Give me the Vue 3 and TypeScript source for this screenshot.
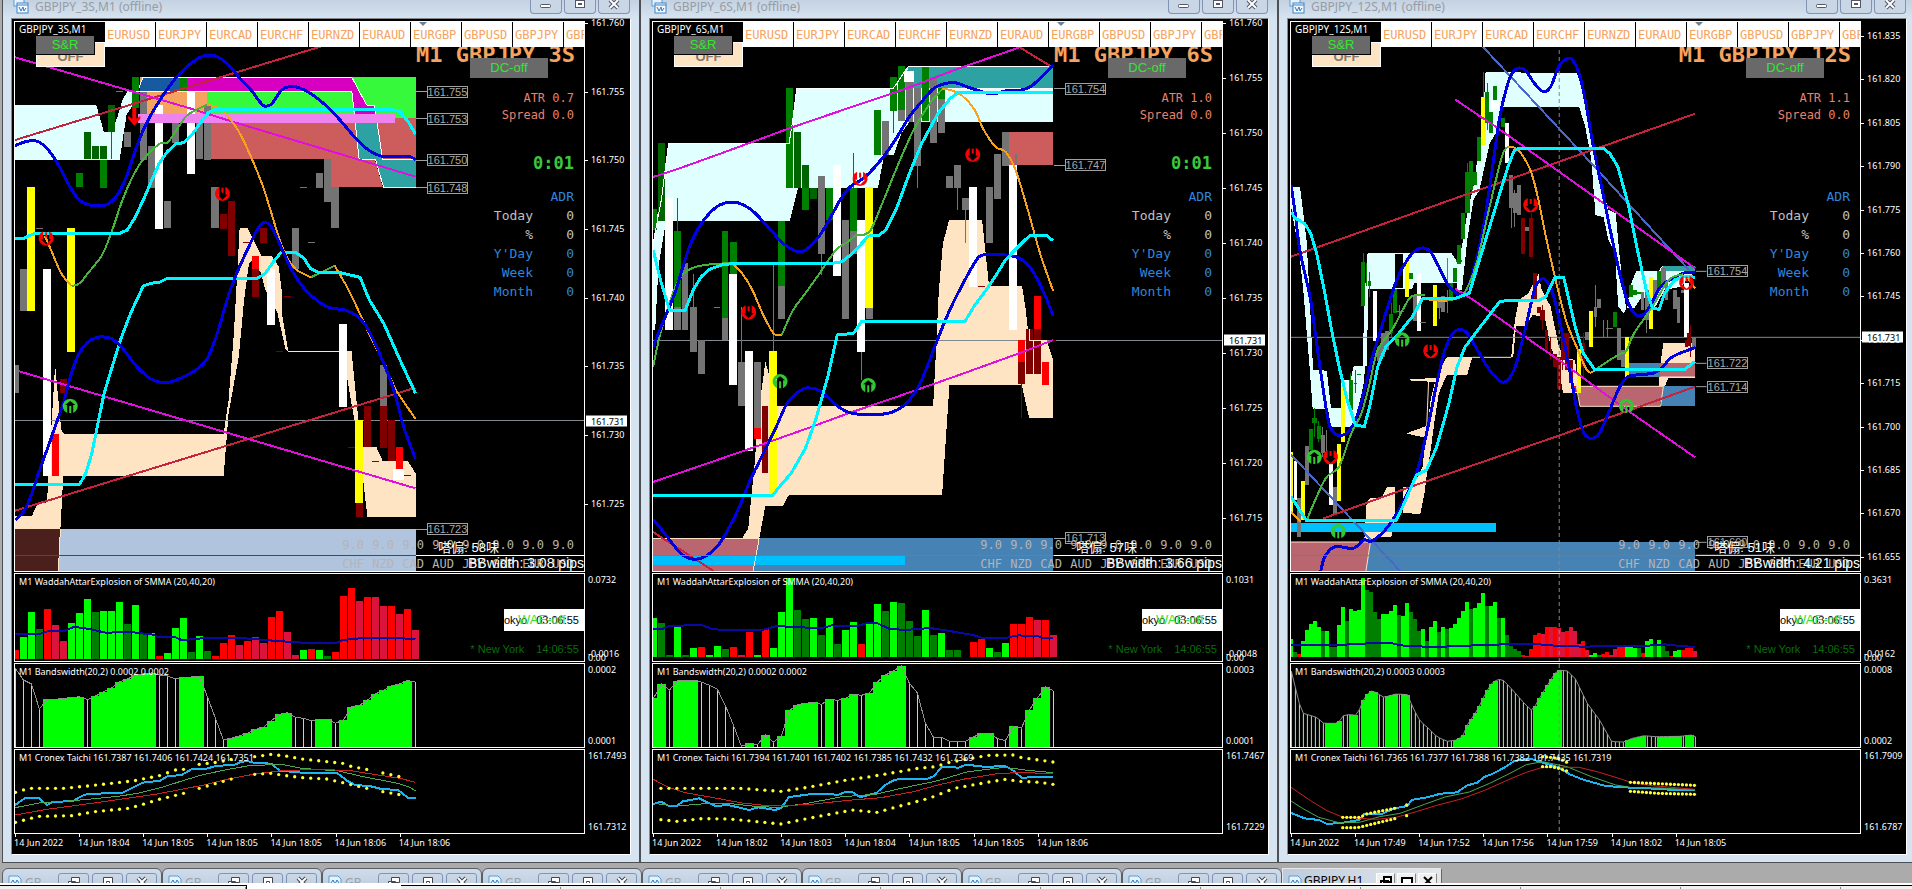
<script setup lang="ts">
type Line = { c: string; w: number; d: string; smooth?: boolean }
type Fill = { c: string; p: string }
interface Chart {
  name: string
  period: string
  x0: number
  width: number
  step: number
  barWidth: number
  top: number
  priceTop: number
  pxPerUnit: number
  ticks: string[]
  current: number
  timer: string
  atr: string
  taste: string
  bb: string
  tagX: number
  tags: [string, number][]
  fills: Fill[]
  candles: string
  lines: Line[]
  marks: [number, number, string][]
  divider: number
  separator: string
  wae: string
  waeBase: number
  waeLine: string
  waeMax: string
  waeMin: string
  bands: string
  bandsText: string
  bandsMax: string
  bandsMin: string
  cronex: [string, string, string]
  dots: string[]
  cronexText: string
  cronexMax: string
  cronexMin: string
  times: string[]
}

const CYAN = '#e0ffff'
const BISQUE = '#ffe4c4'
const TEAL = '#2ea2a2'
const RED = '#cd5c5c'
const ROSE = '#ba6670'
const STEEL = '#4682b4'
const BLUE = '#0000dc'
const AQUA = '#00f5ff'
const GREEN = '#46b43c'
const ORANGE = '#f5a31e'
const CRIMSON = '#c3233c'
const MAGENTA = '#e010dc'
const ROYAL = '#4a68c8'

const candleColors: Record<string, string> = {
  w: '#ffffff', y: '#ffff00', g: '#008000', d: '#006400', x: '#747474', m: '#800000', r: '#ff0000', k: '#000000',
}
const waeColors: Record<string, string> = { r: '#ff0000', c: '#dc143c', g: '#00ff00', d: '#008000' }

const pairs = ['EURUSD', 'EURJPY', 'EURCAD', 'EURCHF', 'EURNZD', 'EURAUD', 'EURGBP', 'GBPUSD', 'GBPJPY', 'GBPCAD']
const currencies = ['CHF', 'NZD', 'CAD', 'AUD', 'JPY', 'GBP', 'EUR', 'USD']
const adrRows = ['Today', '%', "Y'Day", 'Week', 'Month']

const charts: Chart[] = [
  {
    name: 'GBPJPY_3S,M1', period: '3S', x0: 36.75, width: 1394, step: 19.6, barWidth: 17, top: 0,
    priceTop: 161.76, pxPerUnit: 13680, current: 1261, timer: '0:01', atr: '0.7', taste: '嗒傓: 58味', bb: '3.08',
    ticks: ['161.760', '161.755', '161.750', '161.745', '161.740', '161.735', '161.730', '161.725'],
    tagX: 1045,
    tags: [['161.755', 275], ['161.753', 356], ['161.750', 480], ['161.748', 563], ['161.723', 1588]],
    fills: [
      { c: CYAN, p: '37,315 236,315 250,375 254,396 273,396 288,350 300,300 312,274 343,274 325,315 310,345 303,400 293,480 37,480' },
      { c: '#f4a460', p: '343,232 350,232 508,274 508,343 343,343' },
      { c: '#175aa0', p: '343,250 350,232 458,232 458,274 343,274' },
      { c: '#d800c0', p: '458,232 862,232 898,315 918,317 922,345 868,345 862,274 458,274' },
      { c: '#35f93a', p: '862,232 1018,232 1018,354 968,354 968,343 922,343 918,317 898,315' },
      { c: '#35f93a', p: '508,274 862,274 868,343 508,343' },
      { c: TEAL, p: '870,360 925,360 937,478 1018,478 1018,563 940,563 920,480 880,480' },
      { c: RED, p: '968,354 1018,354 1018,478 937,478 925,369 968,369' },
      { c: RED, p: '518,369 870,369 880,478 918,478 938,562 811,562 811,477 518,477' },
      { c: BISQUE, p: '37,1548 78,1548 92,1511 115,1507 125,1300 135,1095 150,1290 157,1302 548,1302 560,1200 573,1000 583,780 587,685 607,685 640,767 665,767 683,800 690,870 692,950 706,1054 700,1050 680,940 650,870 640,820 620,780 610,790 598,900 585,1070 560,1240 548,1427 155,1427 148,1587 37,1587' },
      { c: BISQUE, p: '706,1052 861,1052 878,1260 888,1341 922,1341 938,1384 1000,1384 1018,1420 1018,1551 900,1551 888,1420 868,1260 850,1130 848,1056 706,1056' },
      { c: '#4b1f1b', p: '37,1587 148,1587 143,1713 37,1713' },
      { c: '#b0c4de', p: '148,1587 1018,1587 1018,1713 143,1713' },
    ],
    candles: '58,18,808,932,x 76,18,561,932,y 42,10,1095,1178,x 115,20,808,1428,w 174,20,685,1056,y 155,16,1137,1178,m 136,18,1302,1427,r 194,17,519,561,g 214,17,396,478,d 234,17,438,478,d 253,17,438,478,d 253,17,480,563,g 273,16,315,396,d 273,2,396,478,g 332,18,232,325,g 312,16,396,440,x 351,17,274,480,x 372,17,438,563,x 389,20,315,687,w 411,17,603,685,x 430,17,369,430,x 468,20,274,521,w 450,16,232,274,g 488,18,369,478,x 508,18,319,480,x 527,18,561,685,x 547,17,642,687,m 567,17,603,768,m 645,17,685,728,m 626,18,767,808,r 626,18,808,890,m 664,20,808,974,w 724,18,685,808,x 783,17,519,563,x 802,17,478,606,x 821,18,561,685,x 840,20,972,1220,w 880,19,1260,1509,y 880,17,1510,1551,m 900,17,1218,1342,m 939,17,1095,1218,x 939,17,1218,1343,m 959,17,1260,1384,m 978,17,1341,1407,r 976,26,1407,1440,w 605,18,726,729,m 685,18,1052,1055,m 704,18,888,891,m 743,18,561,564,x 763,18,726,729,x 861,18,1341,1344,m 920,18,1383,1386,m 998,18,1426,1429,m 96,18,684,687,x 293,18,274,277,x',
    lines: [
      { c: '#ffffff', w: 1, d: '340,265 350,232 862,232 898,315 918,317 937,478 1018,478' },
      { c: '#ffffff', w: 1, d: '325,274 862,274 880,479 920,479 940,563 1018,563' },
      { c: '#ee82ee', w: 9, d: '338,356 968,356' },
      { c: BISQUE, w: 1, d: '148,1587 143,1713' },
      { c: CRIMSON, w: 2, d: '37,420 785,140' },
      { c: CRIMSON, w: 2, d: '37,1532 1018,1163' },
      { c: MAGENTA, w: 2, d: '37,172 312,270 460,323 580,369 1018,530' },
      { c: MAGENTA, w: 2, d: '47,1114 1018,1465' },
      { c: ORANGE, w: 2, d: '110,708 125,750 150,820 175,858', smooth: true },
      { c: GREEN, w: 2, d: '175,858 195,850 215,820 250,765 275,690 300,600 325,530 350,480 390,432 410,428 430,395 455,350 480,330 508,314', smooth: true },
      { c: ORANGE, w: 2, d: '508,314 530,320 545,332 575,375 600,430 640,545 660,620 680,700 700,765 725,808 762,832', smooth: true },
      { c: GREEN, w: 2, d: '762,832 820,797' },
      { c: ORANGE, w: 2, d: '820,797 850,860 870,910 900,990 940,1090 970,1170 1000,1225 1018,1256' },
      { c: AQUA, w: 3, d: '37,716 58,715 85,700 293,700 312,690 332,650 351,600 372,540 390,490 410,455 430,432 450,428 470,405 490,370 510,338 525,328 960,328 980,335 1000,365 1018,402' },
      { c: AQUA, w: 3, d: '37,1453 195,1453 210,1420 225,1360 240,1270 255,1180 275,1100 295,1020 320,940 351,858 370,850 392,846 410,835 630,835 650,820 670,785 688,758 725,758 745,775 760,805 780,817 830,817 882,832 905,900 940,970 980,1080 1018,1180' },
      { c: BLUE, w: 3, smooth: true, d: '37,437 60,426 83,422 97,427 115,445 135,478 155,522 175,568 194,600 214,613 235,617 254,617 273,605 293,575 312,522 332,450 351,390 372,340 400,285 430,235 460,198 490,172 515,165 540,175 565,202 590,238 615,270 635,303 648,318 665,312 690,270 710,260 735,264 770,288 810,330 840,370 875,420 905,452 940,470 1000,469 1018,479' },
      { c: BLUE, w: 3, smooth: true, d: '37,1560 60,1530 78,1480 97,1410 115,1350 135,1280 155,1210 175,1120 194,1060 214,1028 235,1013 255,1011 275,1017 300,1045 335,1100 370,1137 405,1148 440,1136 485,1105 510,1070 535,990 560,885 580,820 600,765 630,690 647,667 667,685 690,745 715,810 745,865 780,905 810,924 845,930 875,948 895,975 915,1020 940,1090 965,1170 990,1285 1018,1376' },
    ],
    marks: [[113, 715, 'down'], [545, 581, 'down'], [172, 1218, 'up'], [329, 350, 'arrow']],
    divider: 0, separator: '#4a4a4a',
    wae: '270r 231g 156g 207d 147r 195c 243c 189g 159g 117g 156d 153g 153g 126g 192d 135g 219d 219g 288r 279g 204g 174g 276d 228g 273d 288r 249r 225r 255c 243r 231c 249c 171r 153r 216c 285c 270g 267r 270g 288d 276r 108r 84r 123c 111r 111c 138c 138r 162c 147r 210c',
    waeBase: 297, waeMax: '0.0732', waeMin: '-0.0016',
    waeLine: '38,222 100,221 118,213 160,212 180,201 205,204 260,218 320,216 375,224 385,230 430,232 445,240 480,237 510,233 590,234 620,237 680,243 740,248 825,248 840,240 890,234 950,233 1018,237',
    bands: '325t 360t 372t 447t 418f 418f 415f 413f 410f 419t 408f 396f 384f 366f 357f 345f 342f 339f 345t 348t 357t 352f 351f 349f 410t 475t 540t 535f 528f 520f 508f 502f 482f 463f 458f 472t 475t 482t 478f 478f 490t 480f 441f 436f 420f 402f 391f 378f 372f 362f 366t',
    bandsText: '0.0002 0.0002', bandsMax: '0.0002', bandsMin: '0.0001',
    cronex: [
      '37,735 62,714 95,714 115,735 132,725 178,724 200,708 215,702 300,698 325,683 350,668 392,662 410,649 445,645 470,627 505,626 530,618 575,614 590,606 605,603 625,609 665,611 685,632 740,638 825,638 850,662 870,675 905,678 935,687 975,690 1000,714 1018,714',
      '37,743 100,728 180,722 290,709 340,699 400,681 450,661 500,643 560,628 610,617 690,613 740,625 830,633 890,650 975,670 1000,680 1018,692',
      '37,765 115,748 200,734 300,717 380,703 440,689 500,675 560,657 620,643 690,632 780,628 860,632 900,640 980,655 1018,667',
    ],
    dots: [
      '38,697 57,690 76,685 155,685 215,678 330,662 390,647 430,630 450,628', '488,613 530,607 567,598', '624,590 665,583 705,589 740,597 840,610 860,619 902,629', '938,639 979,650',
      '38,787 75,775 97,769 175,767 232,755 315,745 350,733 390,718 450,700', '488,685 527,671 567,657', '624,643 663,640 700,647 740,653 800,657 840,668 902,686', '938,695 979,704',
    ],
    cronexText: '161.7387 161.7406 161.7424 161.7351', cronexMax: '161.7493', cronexMin: '161.7312',
    times: ['14 Jun 2022', '14 Jun 18:04', '14 Jun 18:05', '14 Jun 18:05', '14 Jun 18:05', '14 Jun 18:06', '14 Jun 18:06'],
  },
  {
    name: 'GBPJPY_6S,M1', period: '6S', x0: 41.65, width: 1394, step: 19.6, barWidth: 17, top: 0,
    priceTop: 161.76, pxPerUnit: 10950, current: 1021, timer: '0:01', atr: '1.0', taste: '嗒傓: 57味', bb: '3.66',
    ticks: ['161.760', '161.755', '161.750', '161.745', '161.740', '161.735', '161.730', '161.725', '161.720', '161.715'],
    tagX: 1050,
    tags: [['161.754', 266], ['161.747', 496], ['161.713', 1615]],
    fills: [
      { c: CYAN, p: '42,730 58,600 80,430 375,430 383,370 394,264 631,264 650,220 667,199 1022,199 1022,366 670,366 650,400 632,464 608,464 593,563 397,563 377,662 90,662 70,690 55,800 47,990 42,990' },
      { c: TEAL, p: '655,264 667,199 1022,199 1022,264' },
      { c: RED, p: '913,396 1022,396 1022,495 913,495' },
      { c: BISQUE, p: '260,1615 275,1585 290,1400 300,1240 317,1085 325,1120 330,1218 728,1218 735,1050 742,870 752,730 767,660 848,660 865,858 946,858 955,930 963,1020 1005,1020 1022,1084 1022,1253 963,1253 945,1155 768,1155 750,1484 375,1484 360,1517 317,1517 302,1615' },
      { c: ROSE, p: '42,1614 302,1614 287,1713 42,1713' },
      { c: STEEL, p: '302,1614 1022,1614 1022,1713 287,1713' },
      { c: '#00bfff', p: '42,1668 660,1668 660,1694 42,1694' },
    ],
    candles: '62,17,430,662,d 46,10,627,690,g 81,20,595,990,w 81,2,990,1090,x 101,17,692,925,g 101,2,595,692,g 101,17,922,990,x 120,17,790,990,x 120,2,990,1056,x 140,17,922,1055,x 140,2,823,922,x 160,17,1020,1122,x 199,16,921,924,x 218,17,692,953,g 218,17,953,1020,x 238,17,725,823,g 238,20,823,1155,w 258,17,1085,1218,x 258,2,920,1085,x 277,20,1053,1353,w 297,17,1085,1285,x 297,17,1285,1318,r 316,17,1218,1419,m 336,2,795,1053,x 336,20,1053,1480,y 356,17,662,858,g 356,17,858,957,x 375,17,264,563,g 395,17,396,563,d 415,17,495,563,d 415,17,563,630,g 434,17,563,597,d 454,17,528,762,x 454,2,762,825,x 473,2,363,563,g 473,17,563,660,g 493,19,495,828,w 513,17,660,957,x 532,2,460,563,g 532,17,563,692,g 532,17,692,762,x 552,20,660,1056,w 552,2,1056,1140,x 571,20,560,924,y 571,17,924,957,x 591,17,330,464,g 611,17,363,464,x 630,17,231,332,g 630,2,332,400,g 650,17,198,330,g 650,17,330,363,x 669,25,213,246,w 669,17,246,366,x 669,2,366,464,x 689,17,264,497,x 689,2,497,563,x 709,17,198,363,g 728,17,231,430,x 748,17,264,297,g 748,17,297,400,x 767,17,528,563,x 767,2,462,528,x 787,17,495,563,x 787,2,563,630,x 807,17,595,630,x 807,2,630,728,x 826,19,560,860,w 846,18,858,861,m 865,17,562,728,x 885,17,462,597,x 905,17,396,497,x 930,5,462,495,x 924,20,495,990,w 944,17,1020,1086,r 944,17,1086,1152,m 944,2,1152,1253,m 963,17,987,1122,m 983,17,888,990,r 983,17,987,1122,m 1003,17,1086,1155,r 1022,12,1020,1023,m',
    lines: [
      { c: '#ffffff', w: 1, d: '42,730 62,600 80,430 375,430 383,370 394,264 631,264 667,199 1022,199' },
      { c: '#ffffff', w: 1, d: '750,264 1022,264' },
      { c: BISQUE, w: 1, d: '42,1614 302,1614 287,1713' },
      { c: BISQUE, w: 1, d: '963,987 963,1021 1005,1021 1022,1084' },
      { c: CRIMSON, w: 2, d: '42,1596 190,1713' },
      { c: MAGENTA, w: 2, d: '42,531 100,508 220,455 380,383 540,316 640,275 700,248 780,210 940,142' },
      { c: CRIMSON, w: 2, d: '940,142 1022,203' },
      { c: MAGENTA, w: 2, d: '42,1446 180,1388 270,1350 420,1285 520,1240 640,1190 780,1130 950,1055 1022,1020' },
      { c: GREEN, w: 2, smooth: true, d: '42,1100 60,1000 90,880 110,830 140,803 190,792 235,790' },
      { c: ORANGE, w: 2, smooth: true, d: '235,790 260,820 285,870 310,940 337,1000 357,1005' },
      { c: GREEN, w: 2, smooth: true, d: '357,1005 385,930 415,880 450,820 490,750 520,725 540,705 555,705 575,690 600,620 640,500 680,390 720,310 750,268' },
      { c: ORANGE, w: 2, smooth: true, d: '750,268 770,270 800,288 830,330 850,385 880,440 905,455 930,510 960,630 990,760 1022,873' },
      { c: BLUE, w: 3, smooth: true, d: '42,1040 60,985 95,880 115,800 135,728 155,680 180,640 205,615 235,606 262,614 290,637 330,690 360,730 385,750 400,755 415,750 440,722 458,692 480,645 500,600 525,560 560,532 600,480 635,420 670,350 700,305 730,265 760,250 785,249 810,260 840,272 870,282 910,272 945,270 970,257 1000,222 1022,195' },
      { c: BLUE, w: 3, smooth: true, d: '42,1558 70,1600 95,1640 118,1668 145,1678 172,1668 200,1638 225,1590 250,1530 280,1440 300,1390 340,1290 370,1210 395,1178 418,1164 450,1172 490,1215 530,1240 600,1243 640,1230 670,1200 700,1140 735,1030 765,940 795,865 830,788 850,765 900,764 940,775 970,810 1000,880 1022,947' },
      { c: AQUA, w: 3, d: '42,750 60,840 82,930 120,932 140,870 160,830 180,808 210,795 240,790 480,790 505,785 530,760 570,708 595,706 612,690 640,620 670,520 700,430 740,340 770,295 790,277 1022,277' },
      { c: AQUA, w: 3, d: '42,1486 335,1486 355,1455 380,1420 415,1345 440,1260 470,1130 493,1005 533,1000 553,964 806,964 830,915 855,875 880,830 905,780 930,748 965,706 1005,706 1022,722' },
    ],
    marks: [[549, 536, 'down'], [825, 464, 'down'], [276, 937, 'down'], [353, 1144, 'up'], [569, 1156, 'up']],
    divider: 0, separator: '#8a7860',
    wae: '174g 189d 286d 201g 286d 264g 261r 286g 258g 267d 261r 286c 216r 286g 207r 264g 156g 54g 150d 177d 174g 225d 174g 252d 210g 186g 252r 192g 132g 153d 126g 129d 183d 228d 150g 225d 219g 270d 270d 290r 246r 237r 264g 276d 249g 192r 192r 171r 180c 180r 225c',
    waeBase: 291, waeMax: '0.1031', waeMin: '-0.0048',
    waeLine: '42,208 65,207 80,199 110,198 125,195 160,195 190,208 235,210 310,210 345,198 420,203 460,203 480,196 500,199 545,197 570,188 590,189 620,206 660,210 720,204 760,211 800,220 825,225 850,234 905,234 935,226 985,229 1000,234 1022,234',
    bands: '415f 372f 390t 363f 361f 361f 366t 376t 388t 437t 495t 559t 550f 554t 525f 546t 528f 451f 435f 430f 427f 433t 418f 421t 415f 403f 406t 399f 366f 345f 333f 318f 370t 399t 490t 532t 532t 544t 545t 544t 531f 520f 520f 536t 542t 499f 504t 450f 414f 381f 392t',
    bandsText: '0.0002 0.0002', bandsMax: '0.0003', bandsMin: '0.0001',
    cronex: [
      '42,732 62,725 80,738 100,738 115,724 155,715 175,727 195,738 225,735 250,742 277,750 300,742 340,750 355,745 375,711 425,703 470,701 495,705 515,695 530,696 550,712 590,698 610,675 635,659 660,656 715,656 730,648 750,620 790,623 810,614 850,620 905,619 920,628 945,653 1022,650',
      '42,730 100,738 180,730 240,732 300,740 350,742 420,730 500,711 590,702 650,685 740,662 810,636 860,628 905,622 960,631 1022,638',
      '42,658 80,682 120,698 190,713 260,729 330,738 420,734 520,721 600,713 680,695 740,675 800,658 880,642 930,638 1022,640',
    ],
    dots: [
      '61,685 255,685 355,694 420,682 520,659 570,651 690,625 735,620 760,609 840,591 860,586 925,585 945,593 1022,606',
      '61,779 100,784 160,776 230,777 355,792 435,772 530,750 590,757 650,737 720,714 780,685 860,667 905,658 940,664 990,667 1022,673',
    ],
    cronexText: '161.7394 161.7401 161.7402 161.7385 161.7432 161.7369', cronexMax: '161.7467', cronexMin: '161.7229',
    times: ['14 Jun 2022', '14 Jun 18:02', '14 Jun 18:03', '14 Jun 18:04', '14 Jun 18:05', '14 Jun 18:05', '14 Jun 18:06'],
  },
  {
    name: 'GBPJPY_12S,M1', period: '12S', x0: 41.8, width: 1398.4, step: 9.83, barWidth: 10.2, top: 13,
    priceTop: 161.835, pxPerUnit: 2883, current: 1012, timer: '', atr: '1.1', taste: '嗒傓: 51味', bb: '4.21',
    ticks: ['161.835', '161.820', '161.805', '161.790', '161.775', '161.760', '161.745', '161.730', '161.715', '161.700', '161.685', '161.670', '161.655'],
    tagX: 1063,
    tags: [['161.754', 814], ['161.722', 1090], ['161.714', 1160], ['161.660', 1627]],
    fills: [
      { c: CYAN, p: '42,561 64,561 80,720 88,900 96,1110 130,1112 140,1225 165,1225 172,1140 188,1140 196,1098 222,1098 226,1000 222,1140 205,1240 190,1280 140,1280 133,1227 95,1227 88,1110 72,870 62,760 42,620' },
      { c: CYAN, p: '230,760 437,760 447,780 460,770 452,850 345,848 340,866 232,866 228,1098 218,1098 222,900' },
      { c: '#000000', p: '297,762 316,762 316,864 297,864' },
      { c: CYAN, p: '447,790 462,740 475,640 490,560 500,475 512,400 520,216 745,220 765,300 785,450 800,540 822,630 840,640 848,750 858,870 866,925 860,940 846,920 838,760 822,720 810,652 790,645 780,480 765,380 750,321 556,321 550,390 530,430 505,570 490,600 475,720 462,870 450,870' },
      { c: CYAN, p: '868,925 875,860 890,813 945,813 955,797 1035,797 1035,812 1000,860 960,870 935,925 905,888 885,925' },
      { c: TEAL, p: '957,797 1035,797 1035,812 950,812' },
      { c: BISQUE, p: '228,1505 236,1494 265,1494 278,1461 297,1461 297,1560 288,1612 250,1612 240,1626 222,1620' },
      { c: BISQUE, p: '318,1540 318,1461 340,1461 365,1400 375,1300 385,1200 395,1150 410,1100 425,1072 487,1072 475,1124 425,1124 405,1180 395,1260 385,1350 375,1430 370,1480 360,1541' },
      { c: BISQUE, p: '325,1300 375,1278 380,1316' },
      { c: BISQUE, p: '317,1140 402,1133 396,1146' },
      { c: BISQUE, p: '583,1072 592,960 602,900 625,880 650,822 658,870 680,920 700,1040 712,1072 740,1080 745,1140 748,1180 710,1178 700,1100 680,1040 665,950 635,945 620,978 595,978 588,1072' },
      { c: BISQUE, p: '957,1030 1035,1030 1035,1133 970,1133 960,1160 945,1160 950,1089' },
      { c: STEEL, p: '870,1089 950,1089 948,1131 870,1131' },
      { c: ROSE, p: '950,1089 1035,1089 1035,1131 948,1131' },
      { c: ROSE, p: '745,1159 957,1159 948,1219 752,1219' },
      { c: STEEL, p: '957,1159 1035,1159 1035,1218 950,1218' },
      { c: '#00bfff', p: '42,1569 545,1569 545,1596 42,1596' },
      { c: ROSE, p: '42,1626 237,1626 226,1713 42,1713' },
      { c: STEEL, p: '237,1626 1035,1626 1035,1713 226,1713' },
    ],
    candles: '42,9,1357,1540,y 52,8,1383,1500,w 61,9,1494,1610,x 71,9,1443,1560,y 81,9,1337,1455,x 91,9,1287,1350,g 91,2,1240,1380,g 100,11,1254,1268,g 100,2,1225,1310,g 110,9,1278,1318,g 110,2,1262,1325,g 120,9,1305,1360,x 120,2,1280,1370,x 130,2,1290,1370,x 140,11,1392,1514,w 150,9,1460,1542,x 160,11,1331,1504,y 170,11,1149,1326,y 189,9,1140,1230,g 189,2,1120,1245,g 200,9,1148,1151,g 200,2,1110,1180,g 209,12,1121,1124,g 209,2,1098,1162,g 219,9,785,918,g 219,2,760,785,g 235,9,842,858,g 235,2,815,890,g 228,2,790,858,g 248,11,872,1022,w 258,9,1040,1082,x 268,9,1000,1072,x 268,2,990,1120,x 278,9,993,1050,x 288,9,942,1000,g 288,2,910,1010,g 297,9,868,940,g 310,18,932,935,x 308,2,915,950,x 327,11,775,892,y 337,9,818,838,g 346,9,888,962,x 356,11,820,994,w 366,14,967,970,x 376,2,900,925,x 396,11,855,977,y 406,9,896,925,x 406,2,890,958,x 416,9,888,935,x 426,2,775,850,x 426,2,870,940,x 435,9,850,900,g 445,9,805,845,g 455,9,735,792,g 455,14,780,785,g 464,9,640,718,g 475,11,515,640,g 475,2,490,515,g 484,9,482,570,g 484,2,475,582,g 494,9,515,555,g 504,9,412,482,g 504,2,395,530,g 515,2,216,291,g 515,11,291,435,y 524,9,275,370,g 524,2,250,390,g 533,9,335,400,g 543,9,258,300,g 543,2,220,260,g 543,20,303,330,w 553,2,290,360,g 563,9,355,380,g 573,11,370,490,w 583,9,525,625,x 583,2,625,684,x 592,9,580,640,x 592,2,570,682,x 602,9,555,645,x 612,9,655,762,m 612,2,640,655,x 622,10,680,692,x 622,2,655,718,x 632,9,655,770,m 632,2,640,655,m 641,9,820,900,m 651,9,920,938,m 660,12,930,960,m 660,2,915,990,m 670,9,990,1050,m 680,2,1010,1080,m 690,9,1062,1100,m 700,10,1072,1168,m 710,9,1000,1080,m 710,2,985,1110,m 720,9,1000,1110,m 730,10,1080,1150,m 740,9,1158,1176,r 750,11,1046,1178,y 760,9,1030,1100,m 760,2,1000,1140,m 770,9,995,1020,x 779,11,932,1042,y 790,9,920,952,x 790,2,855,980,x 799,9,898,925,x 809,2,960,1010,x 824,18,984,987,x 819,2,960,1012,x 838,9,935,980,g 838,2,925,1018,g 848,9,985,1080,x 848,2,980,1100,x 858,9,1050,1100,x 868,11,1012,1132,y 877,9,855,890,g 887,9,870,886,g 897,10,875,882,g 906,9,875,930,x 916,10,870,960,x 916,2,870,1000,x 926,11,830,987,y 936,9,840,900,x 946,9,812,870,g 957,14,803,860,x 965,9,840,900,x 985,9,870,928,x 994,9,890,968,x 1004,9,870,880,x 1014,12,850,1012,w 1020,11,1000,1038,m 1024,2,975,1072,m 1014,9,1020,1040,m 1033,9,1012,1040,x',
    lines: [
      { c: BISQUE, w: 1, d: '487,1072 583,1072' },
      { c: BISQUE, w: 1, d: '380,1142 375,1290' },
      { c: BISQUE, w: 1, d: '743,1159 957,1159 950,1219 752,1219 743,1159' },
      { c: BISQUE, w: 1, d: '42,1626 237,1626 226,1713' },
      { c: BISQUE, w: 1, d: '950,1131 1035,1131' },
      { c: ROYAL, w: 2, d: '513,140 780,490 1020,810' },
      { c: ROYAL, w: 2, d: '42,1364 200,1570 310,1713' },
      { c: CRIMSON, w: 2, d: '42,770 480,580 590,533 1035,341' },
      { c: CRIMSON, w: 2, d: '120,1556 360,1450 700,1307 1035,1160' },
      { c: MAGENTA, w: 2, d: '445,298 510,352 545,380 1035,805' },
      { c: MAGENTA, w: 2, d: '445,866 490,900 640,1030 700,1080 865,1228 1035,1372' },
      { c: ORANGE, w: 2, d: '42,1535 66,1565' },
      { c: ORANGE, w: 2, d: '380,899 425,904' },
      { c: BLUE, w: 3, smooth: true, d: '42,555 52,640 62,740 72,800 90,900 105,1030 120,1160 135,1270 150,1300 163,1307 180,1298 200,1262 220,1180 240,1080 262,990 285,900 305,830 330,775 350,750 368,744 385,756 405,800 425,850 445,878 460,885 475,868 495,790 515,680 535,520 555,350 575,250 590,212 605,204 620,214 640,250 662,275 680,260 700,200 722,175 735,182 750,220 765,300 785,440 810,590 835,740 860,870 875,920 893,947 912,940 930,905 950,860 980,835 1010,818 1035,817' },
      { c: BLUE, w: 3, smooth: true, d: '115,1713 125,1670 150,1640 195,1645 220,1620 242,1622 280,1580 320,1500 350,1420 375,1300 400,1150 420,1050 440,1000 458,988 475,1000 500,1050 530,1110 562,1147 590,1110 615,1000 640,870 655,840 668,840 685,880 705,980 725,1100 745,1230 762,1300 780,1315 800,1300 825,1230 850,1160 870,1130 890,1125 930,1120 950,1108 980,1070 1035,1043' },
      { c: GREEN, w: 2, smooth: true, d: '80,1562 105,1490 130,1430 160,1400 190,1300 215,1240 235,1150 255,1050 290,990 330,900 350,885 370,885' },
      { c: GREEN, w: 2, smooth: true, d: '425,902 460,890 480,850 500,780 530,620 560,470 575,440' },
      { c: ORANGE, w: 2, smooth: true, d: '575,440 600,450 630,510 650,600 670,720 700,880 720,970 740,1030 770,1112 788,1112' },
      { c: GREEN, w: 2, smooth: true, d: '788,1112 810,1092 850,1062 865,1055 885,1000 930,920 970,840 1005,823' },
      { c: ORANGE, w: 2, d: '1018,835 1035,865' },
      { c: AQUA, w: 3, d: '42,636 52,655 75,670 90,700 105,760 125,880 140,980 160,1100 180,1200 200,1275 222,1280 235,1220 255,1100 275,1040 300,1010 340,950 365,897 445,895 480,880 500,800 520,720 550,600 575,500 590,452 600,446 810,446 825,460 845,500 870,610 895,760 915,870 930,925 947,928 960,880 985,840 1010,828 1035,832' },
      { c: AQUA, w: 3, d: '42,1490 80,1562 300,1562 320,1510 350,1425 375,1410 400,1340 430,1210 450,1100 470,1040 520,960 555,904 575,902 650,902 668,890 690,832 712,832 725,900 740,980 760,1060 788,1108 1010,1108 1035,1084' },
    ],
    marks: [[631, 615, 'down'], [1014, 848, 'down'], [385, 1053, 'down'], [139, 1371, 'down'], [315, 1019, 'up'], [99, 1371, 'up'], [158, 1594, 'up'], [866, 1218, 'up']],
    divider: 701, separator: '#8a7860',
    wae: '237g 276d 282r 243g 210g 192g 183g 201g 213d 213g 261d 262d 195g 141g 183d 147g 153g 150g 54g 90d 96d 156d 177d 162g 162g 153g 135g 165d 168g 129g 156d 177d 213d 207g 243d 201g 183g 216d 201g 207d 204g 192g 174g 153g 126g 147d 144g 129g 99g 138d 138g 126g 174d 174g 225d 258d 267d 273d 285r 288c 267r 225r 219r 222c 201r 201c 201r 204c 216c 213r 201c 213c 252c 243r 270c 285g 279g 285d 282r 276r 285c 267c 261r 261r 258g 261g 264g 264d 279r 243g 237g 258d 240g 258d 274d 288r 273g 270g 270r 264r 264r 273c',
    waeBase: 291, waeMax: '0.3631', waeMin: '-0.0162',
    waeLine: '42,255 170,255 190,252 215,253 235,248 285,248 310,256 350,259 400,261 470,257 530,255 575,252 640,252 690,257 760,260 870,257 910,258 960,253 1000,258 1035,261',
    bands: '@42,330 52,380 62,430 72,460 105,472 122,490 158,490 168,468 185,463 205,467 215,430 235,392 250,397 270,412 300,402 330,404 340,440 360,485 380,505 400,530 425,544 450,540 465,525 475,495 500,450 520,400 535,370 550,357 565,362 590,395 615,430 635,453 650,420 670,380 690,340 700,331 720,332 740,355 770,430 800,480 830,545 860,546 880,535 910,527 935,530 1000,529 1025,525 1035,530@122-170 181-205 213-250 271-300 313-333 440-548 636-705 862-912 940-1000 1014-1030',
    bandsText: '0.0003 0.0003', bandsMax: '0.0008', bandsMin: '0.0002',
    cronex: [
      '42,759 75,775 110,780 130,792 170,788 210,780 222,762 265,762 295,745 328,738 338,720 375,712 410,701 450,697 475,676 500,668 515,652 540,640 570,620 590,603 630,596 660,608 700,622 725,642 760,659 815,678 875,683 920,684 940,688 1035,690',
      '42,723 70,745 110,772 160,788 210,787 260,770 310,760 370,733 420,711 480,696 530,670 580,640 620,614 660,605 720,620 780,650 840,675 880,683 950,684 1035,690',
      '42,682 90,722 130,752 170,772 250,778 300,772 350,755 400,736 460,717 520,690 580,657 620,637 660,622 750,622 800,637 850,656 880,668 930,677 1035,688',
    ],
    dots: [
      '169,772 210,772 230,761 297,745', '326,735 327,735', '660,590 680,592 700,595 720,607', '876,667 945,671 1035,676',
      '169,803 205,803 297,776', '326,767 327,767', '660,620 680,620 700,625 720,633', '876,694 945,700 1035,703',
    ],
    cronexText: '161.7365 161.7377 161.7388 161.7382 161.7435 161.7319', cronexMax: '161.7909', cronexMin: '161.6787',
    times: ['14 Jun 2022', '14 Jun 17:49', '14 Jun 17:52', '14 Jun 17:56', '14 Jun 17:59', '14 Jun 18:02', '14 Jun 18:05'],
  },
]

const toPoints = (s: string): [number, number][] =>
  s.split(' ').map((p) => p.split(',').map(Number) as [number, number])

function linePath(line: Line): string {
  const p = toPoints(line.d)
  let out = `M${p[0][0]} ${p[0][1]}`
  for (let i = 0; i < p.length - 1; i++) {
    const b = p[i]
    const c = p[i + 1]
    if (!line.smooth) {
      out += `L${c[0]} ${c[1]}`
      continue
    }
    const a = p[i - 1] ?? b
    const d = p[i + 2] ?? c
    out += `C${b[0] + (c[0] - a[0]) / 6} ${b[1] + (c[1] - a[1]) / 6} ${c[0] - (d[0] - b[0]) / 6} ${c[1] - (d[1] - b[1]) / 6} ${c[0]} ${c[1]}`
  }
  return out
}

function valueAt(points: [number, number][], x: number): number {
  for (let i = 1; i < points.length; i++) {
    if (x <= points[i][0]) {
      const [ax, ay] = points[i - 1]
      const [bx, by] = points[i]
      return ay + ((by - ay) * (x - ax)) / (bx - ax)
    }
  }
  return points[points.length - 1][1]
}

const candlesOf = (c: Chart) =>
  c.candles.split(' ').map((s) => {
    const [x, w, y1, y2, k] = s.split(',')
    return { x: +x - +w / 2, w: +w, y: +y1, h: +y2 - +y1, c: candleColors[k] }
  })

const barX = (c: Chart, k: number) => c.x0 + 1 + k * c.step

const waeOf = (c: Chart) =>
  c.wae.split(' ').map((s, k) => {
    const y = parseInt(s)
    return { x: barX(c, k) - c.barWidth / 2, y, h: c.waeBase - y, c: waeColors[s.slice(-1)] }
  })

function bandsOf(c: Chart) {
  if (!c.bands.startsWith('@')) {
    return c.bands.split(' ').map((s, k) => ({ x: barX(c, k), y: parseInt(s), fill: s.endsWith('f') }))
  }
  const [, curve, ranges] = c.bands.split('@')
  const points = toPoints(curve)
  const spans = ranges.split(' ').map((r) => r.split('-').map(Number))
  return Array.from({ length: 102 }, (_, k) => {
    const x = barX(c, k)
    return { x, y: valueAt(points, x), fill: spans.some(([a, b]) => x >= a && x <= b) }
  })
}

function dotsOf(c: Chart) {
  return c.dots.flatMap((seg) => {
    const p = toPoints(seg)
    const list: { x: number; y: number }[] = []
    for (let x = p[0][0]; x <= p[p.length - 1][0] + 1; x += c.step) list.push({ x, y: valueAt(p, x) })
    return list
  })
}

const views = charts.map((c) => ({
  ...c,
  candleRects: candlesOf(c),
  waeRects: waeOf(c),
  bandBars: bandsOf(c),
  bandLine: bandsOf(c).map((b) => `${b.x},${b.y}`).join(' '),
  dotList: dotsOf(c),
  paths: c.lines.map((l) => ({ c: l.c, w: l.w, d: linePath(l) })),
}))

const pct = (y: number) => `${((y - 66) / 1647) * 100}%`
const tickTop = (c: Chart, label: string) => `${((c.top + 2 + (c.priceTop - +label) * c.pxPerUnit) / 549) * 100}%`
const tagLeft = (c: Chart) => `${((c.tagX - c.x0) / c.width) * 100}%`
const timeLeft = (k: number) => `${(k * 64 * 100) / 569}%`
const minimized = Array.from({ length: 8 }, (_, i) => i)
const fileTabs = Array.from({ length: 12 }, (_, i) => i)
</script>

<template>
  <main class="desktop">
    <div class="windows">
      <section v-for="c in views" :key="c.name" class="win">
        <header class="bar">
          <svg class="bar-icon" viewBox="0 0 16 16" width="16" height="16">
            <rect x="1" y="0" width="10" height="8" fill="#e8f2fc" stroke="#5a9bd5" />
            <rect x="4" y="5" width="11" height="10" fill="#f4f9ff" stroke="#3d85c6" />
            <path d="M4 7h11" stroke="#3d85c6" />
            <path d="M6 9l2 4 2-4 1 4 2-3" fill="none" stroke="#2f78bd" />
          </svg>
          <span class="bar-title">{{ c.name }} (offline)</span>
          <button class="ctl" aria-label="Minimize">
            <svg viewBox="0 0 32 14" width="32" height="14"><rect x="10.5" y="4.5" width="10" height="3" rx="1" fill="#fff" stroke="#556" /></svg>
          </button>
          <button class="ctl" aria-label="Maximize">
            <svg viewBox="0 0 32 14" width="32" height="14">
              <rect x="11.5" y="0.5" width="9" height="7" fill="#fff" stroke="#556" />
              <rect x="14.5" y="3.5" width="3" height="1" fill="#fff" stroke="#556" />
            </svg>
          </button>
          <button class="ctl" aria-label="Close">
            <svg viewBox="0 0 32 14" width="32" height="14">
              <path d="M12 0l8 8M20 0l-8 8" stroke="#556" stroke-width="4" />
              <path d="M12 0l8 8M20 0l-8 8" stroke="#fff" stroke-width="2" />
            </svg>
          </button>
        </header>

        <div class="chart">
          <div class="pane">
            <div class="plot main">
              <svg :viewBox="`${c.x0} 66 ${c.width} 1647`" preserveAspectRatio="none">
                <polygon v-for="(f, i) in c.fills" :key="'f' + i" :points="f.p" :fill="f.c" />
                <line :x1="c.x0" :x2="c.x0 + c.width" :y1="c.current" :y2="c.current" stroke="#808890" />
                <rect v-for="(r, i) in c.candleRects" :key="'c' + i" :x="r.x" :y="r.y" :width="r.w" :height="r.h" :fill="r.c" />
                <line v-if="c.divider" :x1="c.divider" :x2="c.divider" y1="66" y2="1713" stroke="#808890" stroke-dasharray="4 3" />
                <path v-for="(l, i) in c.paths" :key="'l' + i" :d="l.d" fill="none" :stroke="l.c" :stroke-width="l.w" stroke-linejoin="round" />
                <line :x1="c.x0" :x2="c.tagX - 26" y1="1666" y2="1666" :stroke="c.separator" />
                <line :x1="c.tagX - 26" :x2="c.x0 + c.width" y1="1666" y2="1666" stroke="#fff" />
                <line v-for="t in c.tags" :key="t[0]" :x1="c.tagX - 26" :x2="c.tagX" :y1="t[1]" :y2="t[1]" stroke="#a0a0a0" />
                <g v-for="(m, i) in c.marks" :key="'m' + i" class="mark" :transform="`translate(${m[0]} ${m[1]}) scale(2.45 3)`">
                  <path v-if="m[2] === 'down'" fill="#fa0000" d="M-3-7a7.500 7.500 0 1 0 6 0v8h2l-5 5-5-5h2z" />
                  <path v-if="m[2] === 'down'" fill="#fa0000" d="M-1-6h2v5h-2z" />
                  <path v-if="m[2] === 'up'" fill="#32c832" d="M-3 7a7.500 7.500 0 1 1 6 0v-8h2l-5-4-5 4h2z" />
                  <path v-if="m[2] === 'up'" fill="#32c832" d="M-1 0h2v7h-2z" />
                  <path v-if="m[2] === 'arrow'" fill="#ff0000" d="M-2-9h4v11l4-3v3l-6 7-6-7v-3l4 3z" />
                </g>
              </svg>
              <nav class="pairs">
                <button v-for="p in pairs" :key="p">{{ p }}</button>
              </nav>
              <i class="shift"></i>
              <span class="symbol">{{ c.name }}</span>
              <button class="off">OFF</button>
              <button class="snr">S&amp;R</button>
              <h2 class="headline">M1 GBPJPY {{ c.period }}</h2>
              <button class="dc">DC-off</button>
              <p class="stats">ATR {{ c.atr }}<br />Spread 0.0</p>
              <p v-if="c.timer" class="timer">{{ c.timer }}</p>
              <table class="adr">
                <tbody>
                  <tr><th colspan="2" class="blue">ADR</th></tr>
                  <tr v-for="(r, i) in adrRows" :key="r" :class="{ blue: i > 1 }">
                    <th>{{ r }}</th><td>0</td>
                  </tr>
                </tbody>
              </table>
              <table class="strength">
                <tbody>
                  <tr><td v-for="k in currencies" :key="k">9.0</td></tr>
                  <tr><td v-for="k in currencies" :key="k">{{ k }}</td></tr>
                </tbody>
              </table>
              <span v-for="t in c.tags" :key="t[0]" class="tag" :style="{ left: tagLeft(c), top: pct(t[1]) }">{{ t[0] }}</span>
              <span class="taste">{{ c.taste }}</span>
              <span class="bb">BBwidth: {{ c.bb }} pips</span>
            </div>
            <div class="axis">
              <span v-for="t in c.ticks" :key="t" class="tick" :style="{ top: tickTop(c, t) }">{{ t }}</span>
              <b class="current" :style="{ top: pct(c.current) }">161.731</b>
            </div>
          </div>

          <div class="pane">
            <div class="plot wae">
              <svg :viewBox="`${c.x0} 42 ${c.width} 261`" preserveAspectRatio="none">
                <rect v-for="(r, i) in c.waeRects" :key="i" :x="r.x" :y="r.y" :width="c.barWidth" :height="r.h" :fill="r.c" />
                <line v-if="c.divider" :x1="c.divider" :x2="c.divider" y1="42" y2="303" stroke="#808890" stroke-dasharray="4 3" />
                <polyline :points="c.waeLine" fill="none" stroke="#0a0aa0" stroke-width="2" />
              </svg>
              <span class="label">M1 WaddahAttarExplosion of SMMA (20,40,20)</span>
              <button class="session"><span class="wae-off">WAE-off</span><span class="city">okyo</span><span>03:06:55</span></button>
              <span class="newyork"><span>* New York</span><span>14:06:55</span></span>
            </div>
            <div class="axis">
              <span class="hi">{{ c.waeMax }}</span>
              <span class="lo zero">0.00</span>
              <span class="lo wlo">{{ c.waeMin }}</span>
            </div>
          </div>

          <div class="pane">
            <div class="plot bands">
              <svg :viewBox="`${c.x0} 312 ${c.width} 249`" preserveAspectRatio="none">
                <template v-for="(b, i) in c.bandBars" :key="i">
                  <rect v-if="b.fill" :x="b.x - c.step / 2" :y="b.y" :width="c.step + 0.5" :height="561 - b.y" fill="#00ff00" />
                  <line v-else :x1="b.x" :x2="b.x" :y1="b.y" y2="561" stroke="#a8e8a8" />
                </template>
                <line v-if="c.divider" :x1="c.divider" :x2="c.divider" y1="312" y2="561" stroke="#808890" stroke-dasharray="4 3" />
                <polyline :points="c.bandLine" fill="none" stroke="#909090" />
              </svg>
              <span class="label">M1 Bandswidth(20,2) {{ c.bandsText }}</span>
            </div>
            <div class="axis">
              <span class="hi">{{ c.bandsMax }}</span>
              <span class="lo">{{ c.bandsMin }}</span>
            </div>
          </div>

          <div class="pane">
            <div class="plot bands">
              <svg :viewBox="`${c.x0} 570 ${c.width} 249`" preserveAspectRatio="none">
                <line v-if="c.divider" :x1="c.divider" :x2="c.divider" y1="570" y2="819" stroke="#808890" stroke-dasharray="4 3" />
                <polyline :points="c.cronex[0]" fill="none" stroke="#1eb4f0" stroke-width="2" />
                <polyline :points="c.cronex[1]" fill="none" stroke="#4aa852" />
                <polyline :points="c.cronex[2]" fill="none" stroke="#c82323" />
                <ellipse v-for="(d, i) in c.dotList" :key="i" :cx="d.x" :cy="d.y" rx="4" ry="5" fill="#ffff32" class="mark" />
              </svg>
              <span class="label">M1 Cronex Taichi {{ c.cronexText }}</span>
            </div>
            <div class="axis">
              <span class="hi">{{ c.cronexMax }}</span>
              <span class="lo">{{ c.cronexMin }}</span>
            </div>
          </div>

          <div class="pane">
            <div class="times">
              <span v-for="(t, i) in c.times" :key="i" :style="{ left: timeLeft(i) }">{{ t }}</span>
            </div>
          </div>
        </div>
      </section>
    </div>

    <div class="dock">
      <div v-for="m in minimized" :key="m" class="mini">
        <svg class="mini-icon" viewBox="0 0 14 14" width="14" height="14">
          <path d="M1 1h9l3 3v10H1z" fill="#e8f2fc" stroke="#5a9bd5" />
          <path d="M3 8l2-3 2 4 2-4 2 3M2 11h10" fill="none" stroke="#2f78bd" />
        </svg>
        <span class="mini-name">GB...</span>
        <button class="mctl" aria-label="Restore">
          <svg viewBox="0 0 14 12" width="14" height="12"><path d="M4.5 1.5h8v5h-8zM1.5 5.5h7v5h-7z" fill="#fff" stroke="#445" /></svg>
        </button>
        <button class="mctl" aria-label="Maximize">
          <svg viewBox="0 0 14 12" width="14" height="12"><path d="M2.5 1.5h9v9h-9zM5.5 5.5h3v2h-3z" fill="#fff" stroke="#445" /></svg>
        </button>
        <button class="mctl" aria-label="Close">
          <svg viewBox="0 0 14 12" width="14" height="12">
            <path d="M3 2l8 8M11 2l-8 8" stroke="#445" stroke-width="4" /><path d="M3 2l8 8M11 2l-8 8" stroke="#fff" stroke-width="2" />
          </svg>
        </button>
      </div>
      <div class="mini active">
        <svg class="mini-icon" viewBox="0 0 14 14" width="14" height="14">
          <path d="M1 1h9l3 3v10H1z" fill="#e8f2fc" stroke="#5a9bd5" />
          <path d="M3 8l2-3 2 4 2-4 2 3M2 11h10" fill="none" stroke="#2f78bd" />
        </svg>
        <span class="mini-name">GBPJPY,H1</span>
        <button class="mctl" aria-label="Restore">
          <svg viewBox="0 0 14 12" width="14" height="12"><path d="M5 2h7v5H5zM2 6h7v5H2z" fill="#fff" stroke="#000" stroke-width="2" /></svg>
        </button>
        <button class="mctl" aria-label="Maximize">
          <svg viewBox="0 0 14 12" width="14" height="12"><path d="M2 3h10v9H2z" fill="#fff" stroke="#000" stroke-width="2" /></svg>
        </button>
        <button class="mctl" aria-label="Close">
          <svg viewBox="0 0 14 12" width="14" height="12"><path d="M3 2l8 8M11 2l-8 8" stroke="#000" stroke-width="2" /></svg>
        </button>
      </div>
    </div>
    <footer class="files">
      <i v-for="t in fileTabs" :key="t" :class="{ open: t === 1, first: t === 0 }"></i>
    </footer>
  </main>
</template>

<style>
body { margin: 0; }
</style>

<style scoped>
.desktop {
  height: 100vh;
  overflow: hidden;
  display: flex;
  flex-direction: column;
  background: #ababab;
  font-family: "Noto Sans", "Open Sans", sans-serif;
}
button {
  margin: 0;
  padding: 0;
  border: 0;
  font: inherit;
  color: inherit;
  background: none;
}
p, h2 { margin: 0; }
.windows {
  display: grid;
  grid-template-columns: repeat(3, minmax(0, 1fr));
  margin: 0 -4px 0 2px;
}
.win {
  box-sizing: border-box;
  border: 1px solid #4c4f54;
  border-top: 0;
  padding: 0 8px 7px;
  background: #d6e3f0;
}
.bar {
  display: flex;
  align-items: flex-start;
  gap: 2px;
  height: 18px;
  margin: 0 -8px;
  padding: 0 9px 0 10px;
  background: linear-gradient(#c3d1e1, #d6e3f0);
}
.bar-icon { margin-top: -2px; }
.bar-title {
  flex: 1;
  margin-left: 4px;
  font-size: 12px;
  line-height: 14px;
  color: #979ca3;
}
.ctl {
  width: 32px;
  height: 14px;
  box-sizing: border-box;
  border: 1px solid #8393b3;
  border-top: 0;
  border-radius: 0 0 4px 4px;
  display: flex;
  justify-content: center;
  align-items: flex-start;
  overflow: hidden;
  background: #c9d6e6;
}
.ctl svg { flex: none; }
.chart {
  border: 1px solid #85898e;
  border-right-color: #fff;
  border-bottom-color: #fff;
  padding: 2px 0 0 2px;
  background: #000;
  display: grid;
  gap: 1px;
  color: #fff;
  font-size: 9px;
  line-height: 12px;
}
.pane {
  display: grid;
  grid-template-columns: minmax(0, 1fr) 45px;
}
.plot {
  position: relative;
  border: 1px solid #fff;
  overflow: hidden;
}
.plot > svg {
  display: block;
  width: 100%;
  height: 100%;
  shape-rendering: crispEdges;
}
.plot > svg :is(line, polyline, path) { vector-effect: non-scaling-stroke; }
.plot > svg .mark, .plot > svg .mark path { shape-rendering: auto; vector-effect: none; }
.main { height: 549px; }
.wae { height: 87px; }
.bands { height: 83px; }
.plot > span, .plot > button, .plot > nav, .plot > h2, .plot > p, .plot > table, .plot > i { position: absolute; }
.axis { position: relative; white-space: nowrap; }
.axis > * { position: absolute; left: 3px; }
.axis .tick { left: 6px; transform: translateY(-50%); }
.tick::before {
  content: "";
  position: absolute;
  left: -6px;
  top: 6px;
  width: 3px;
  border-top: 1px solid #fff;
}
.axis .current {
  left: 1px;
  width: 36px;
  padding-left: 5px;
  height: 11px;
  line-height: 11px;
  transform: translateY(-50%);
  font-weight: 400;
  background: #fff;
  color: #000;
}
.hi { top: 1px; }
.lo { bottom: 1px; }
.wlo { bottom: 2px; }
.axis .zero { bottom: -2px; }
.label { left: 4px; top: 2px; white-space: nowrap; }
.pairs {
  left: 90px;
  right: 0;
  top: 0;
  z-index: 1;
  height: 25px;
  display: flex;
  overflow: hidden;
  background: #fff;
}
.pairs button {
  flex: 0 0 51px;
  box-sizing: border-box;
  border-right: 1px solid #000;
  padding-left: 2px;
  text-align: left;
  font-family: "DejaVu Sans Mono", monospace;
  font-size: 12px;
  line-height: 26px;
  color: #f4a460;
}
.shift {
  right: 157px;
  top: 0;
  z-index: 2;
  border: 4px solid transparent;
  border-top-color: #708090;
  border-bottom: 0;
}
.symbol { left: 4px; top: 1px; font-size: 10px; }
.off {
  left: 21px;
  top: 20px;
  width: 69px;
  height: 25px;
  border: 1px solid #fff;
  background: #ffe4c4;
  color: #84796c;
  font: bold 13px/27px "Liberation Sans", Arial, sans-serif;
}
.snr, .dc {
  background: #696969;
  color: #32e632;
  font: 13px/18px "Liberation Sans", Arial, sans-serif;
}
.snr { left: 21px; top: 14px; width: 59px; height: 19px; border-right: 1px solid #000; border-bottom: 1px solid #000; }
.dc { right: 36px; top: 36px; width: 78px; height: 20px; }
.headline, .stats, .timer, .adr, .strength { font-family: "DejaVu Sans Mono", monospace; }
.headline { right: 9px; top: 21px; font-size: 22px; line-height: 24px; color: #f4a460; white-space: pre; }
.stats { right: 10px; top: 68px; font-size: 12px; line-height: 17px; text-align: right; color: #e8806e; }
.timer { right: 10px; top: 131px; font-size: 17px; line-height: 20px; font-weight: 700; color: #3cc83c; }
.adr {
  right: 10px;
  top: 165px;
  border-collapse: collapse;
  font-size: 13px;
  line-height: 19px;
  color: #c0c0c0;
  text-align: right;
}
.adr th, .adr td { padding: 0; font-weight: 400; text-align: right; }
.adr td { width: 41px; }
.adr .blue { color: #2f86dc; }
.strength {
  right: 10px;
  top: 514px;
  border-collapse: collapse;
  font-size: 12px;
  line-height: 19px;
  color: #b4b4b4;
  text-align: right;
}
.strength td { width: 30px; padding: 0; }
.tag {
  transform: translateY(-50%);
  border: 1px solid #a0a0a0;
  height: 10px;
  line-height: 11px;
  font-family: "Liberation Sans", Arial, sans-serif;
  font-size: 11px;
  color: #a8a8a8;
}
.taste {
  right: 85px;
  top: 518px;
  font-family: "Liberation Sans", "Noto Sans CJK SC", sans-serif;
  font-size: 13px;
  line-height: 16px;
  white-space: nowrap;
}
.bb {
  right: 0;
  top: 531px;
  font: 14px/20px "Liberation Sans", Arial, sans-serif;
  white-space: nowrap;
}
.session, .newyork { font: 11px/22px "Liberation Sans", Arial, sans-serif; }
.session {
  right: 0;
  top: 35px;
  width: 80px;
  height: 22px;
  padding-right: 5px;
  display: flex;
  justify-content: space-between;
  background: #fff;
  color: #000;
}
.session .wae-off {
  position: absolute;
  left: 14px;
  font-size: 13px;
  color: #32e632;
}
.newyork {
  right: 5px;
  top: 64px;
  display: flex;
  gap: 12px;
  color: #0a6e0a;
}
.times { position: relative; height: 19px; margin-left: 1px; }
.times span {
  position: absolute;
  top: 2px;
  margin-left: -1px;
  white-space: nowrap;
}
.times span::before {
  content: "";
  position: absolute;
  left: 1px;
  top: -3px;
  height: 3px;
  border-left: 1px solid #fff;
}
.dock {
  flex: 1;
  min-height: 0;
  display: flex;
  padding: 5px 0 0 2px;
  overflow: hidden;
}
.mini {
  box-sizing: border-box;
  flex: 0 0 160px;
  height: 26px;
  display: flex;
  align-items: flex-start;
  gap: 3px;
  padding: 4px 4px 0 5px;
  border: 1px solid #5a5f66;
  border-radius: 6px 6px 0 0;
  background: linear-gradient(#d0dcea, #b9c8da);
}
.mini-icon { margin-top: 2px; }
.mini-name { flex: 1; margin-top: 2px; font-size: 12px; line-height: 16px; color: #98a0aa; }
.mctl {
  width: 31px;
  height: 20px;
  box-sizing: border-box;
  padding-top: 2px;
  border: 1px solid #8393b3;
  border-radius: 3px;
  display: flex;
  justify-content: center;
}
.active { border-radius: 0; border-color: #e8e8e8 #666 #666 #e8e8e8; background: linear-gradient(90deg, #bccbdd, #e4e8ec); gap: 2px; }
.active .mini-name { margin-top: 0; color: #000; }
.active .mctl { width: 19px; background: #f0f0f0; border-color: #fff #888 #888 #fff; border-radius: 0; padding-top: 1px; }
.files {
  height: 6px;
  display: flex;
  overflow: hidden;
  background: #fff;
}
.files i {
  flex: 0 0 160px;
  box-sizing: border-box;
  margin-top: 2px;
  border-top: 1px solid #000;
  background: linear-gradient(#888, #888) right bottom / 1px 2px no-repeat #f0f0f0;
}
.files .first { flex-basis: 247px; border-right: 1px solid #000; }
.files .open { flex-basis: 154px; border-color: #fff; background: #fff; }
</style>
